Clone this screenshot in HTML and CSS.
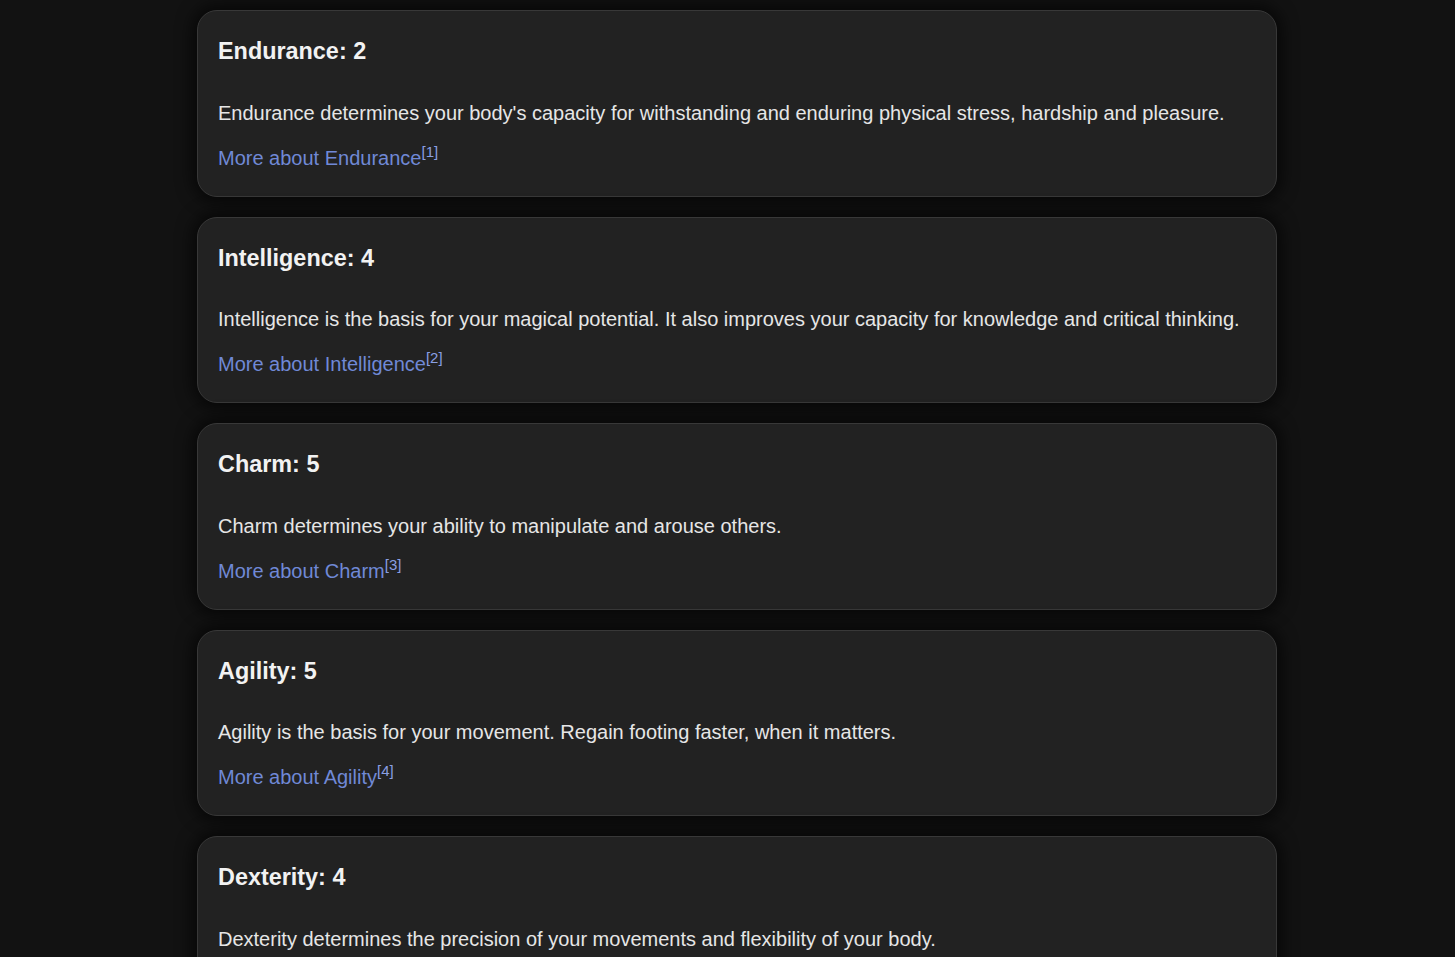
FILE: index.html
```html
<!DOCTYPE html>
<html lang="en">
  <head>
    <meta charset="UTF-8" />
    <meta name="viewport" content="width=device-width, initial-scale=1.0" />
    <title>Stats</title>
    <link rel="stylesheet" href="styles.css">
  </head>

  <body>
    <div class="stats">
      <div class="stat-card">
        <h3>Endurance: 2</h3>
        <p>Endurance determines your body's capacity for withstanding and enduring physical stress, hardship and pleasure.</p>
        <p class="stat-more"><a href="#">More about Endurance<sup>[1]</sup></a></p>
      </div>

      <div class="stat-card">
        <h3>Intelligence: 4</h3>
        <p>Intelligence is the basis for your magical potential. It also improves your capacity for knowledge and critical thinking.</p>
        <p class="stat-more"><a href="#">More about Intelligence<sup>[2]</sup></a></p>
      </div>

      <div class="stat-card">
        <h3>Charm: 5</h3>
        <p>Charm determines your ability to manipulate and arouse others.</p>
        <p class="stat-more"><a href="#">More about Charm<sup>[3]</sup></a></p>
      </div>

      <div class="stat-card">
        <h3>Agility: 5</h3>
        <p>Agility is the basis for your movement. Regain footing faster, when it matters.</p>
        <p class="stat-more"><a href="#">More about Agility<sup>[4]</sup></a></p>
      </div>

      <div class="stat-card">
        <h3>Dexterity: 4</h3>
        <p>Dexterity determines the precision of your movements and flexibility of your body.</p>
        <p class="stat-more"><a href="#">More about Dexterity<sup>[5]</sup></a></p>
      </div>
    </div>
  </body>
</html>
```

FILE: styles.css
```css
* {
  margin: 0;
  padding: 0;
  box-sizing: border-box;
}

body {
  background: #121212;
  color: #e6e6e6;
  font-family: "Liberation Sans", Arial, sans-serif;
  font-size: 20px;
  overflow: hidden;
}

.stats {
  max-width: 1099px;
  margin: 0 auto;
  padding: 10px 0 0 19px;
  display: flex;
  flex-direction: column;
  gap: 20px;
}

.stat-card {
  background: #222222;
  border: 1px solid #383838;
  border-radius: 20px;
  padding: 26px 20px 25px;
  box-shadow: 0 0 16px 5px rgba(0, 0, 0, 0.6);
}

.stat-card h3 {
  font-size: 23.4px;
  font-weight: 700;
  line-height: 28px;
  color: #f2f2f2;
  margin-bottom: 34.5px;
}

.stat-card p {
  line-height: 26px;
}

.stat-card .stat-more {
  margin-top: 19px;
}

.stat-more a {
  color: #7089d6;
  text-decoration: none;
}

.stat-more sup {
  font-size: 15px;
  line-height: 0;
  color: #8a9fe2;
}
```
